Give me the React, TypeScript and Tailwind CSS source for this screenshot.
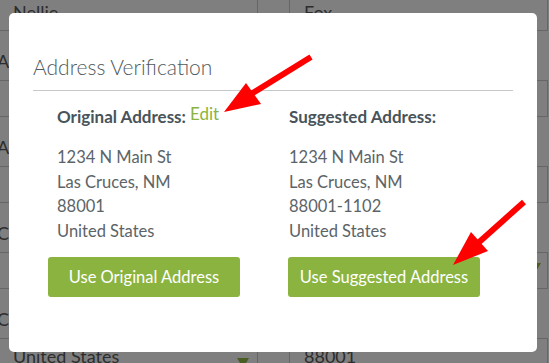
import React from "react";

const font = { fontFamily: "Lato, 'Open Sans', sans-serif" };

function Tri({ className }: { className?: string }) {
  return (
    <svg width="12" height="10" viewBox="0 0 12 10" className={className}>
      <polygon points="0,0 12,0 6,10" fill="#4a5d22" />
    </svg>
  );
}

function InputRow({ left, right, leftSelect, rightSelect }: { left?: string; right?: string; leftSelect?: boolean; rightSelect?: boolean }) {
  return (
    <div className="flex h-[37px]">
      <div className="relative -ml-px flex w-[259px] shrink-0 items-center border border-[#666] pl-[13px] text-[18px] text-[#2d2d2d]">
        {left}
        {leftSelect && <Tri className="absolute right-[8px] top-[19px]" />}
      </div>
      <div className="-ml-px w-[33px] shrink-0 border border-[#666]" />
      <div className="relative -ml-px flex w-[259px] shrink-0 items-center border border-[#666] pl-[14px] text-[18px] text-[#2d2d2d]">
        {right}
        {rightSelect && <Tri className="absolute right-[6px] top-[10px]" />}
      </div>
    </div>
  );
}

function LabelRow({ text }: { text: string }) {
  return (
    <div className="h-[49px] pt-[18px] -ml-[3px] text-[18px] leading-[24px] text-[#2d2d2d]">{text}</div>
  );
}

export default function App() {
  return (
    <div className="relative h-[363px] w-[549px] overflow-hidden bg-[#7f7f7f]" style={font}>
      <div className="-mt-[6px] flex flex-col">
        <InputRow left="Nellie" right="Fox" />
        <LabelRow text="Address" />
        <InputRow />
        <LabelRow text="Apt" />
        <InputRow />
        <LabelRow text="City" />
        <InputRow rightSelect />
        <LabelRow text="Country" />
        <InputRow left="United States" right="88001" leftSelect />
      </div>

      <div className="absolute left-[9px] top-[13px] h-[339px] w-[528px] rounded-[5px] bg-white px-[24px] pt-[42px]">
        <div className="text-[21px] leading-[24px] text-[#4f5a5e]" style={{ fontWeight: 300 }}>Address Verification</div>
        <div className="mt-[11px] h-px bg-[#c8c8c8]" />
        <div className="mt-[14px] grid grid-cols-2">
          <div>
            <div className="flex items-end pl-[24px] leading-[24px]">
              <span className="text-[17px] font-bold text-[#48535a]">Original Address:</span>
              <span className="ml-[4px] -translate-y-[3px] text-[17px] text-[#8ab43f]">Edit</span>
            </div>
            <div className="mt-[16px] pl-[24px] text-[16.5px] leading-[24.5px] text-[#5b6468]">
              <div>1234 N Main St</div>
              <div>Las Cruces, NM</div>
              <div>88001</div>
              <div>United States</div>
            </div>
            <button className="ml-[15px] mt-[14px] h-[40px] w-[192px] rounded-[3px] bg-[#8ab43f] text-[16.5px] text-white">
              Use Original Address
            </button>
          </div>
          <div>
            <div className="pl-[16px] text-[17px] font-bold leading-[24px] text-[#48535a]">Suggested Address:</div>
            <div className="mt-[16px] pl-[16px] text-[16.5px] leading-[24.5px] text-[#5b6468]">
              <div>1234 N Main St</div>
              <div>Las Cruces, NM</div>
              <div>88001-1102</div>
              <div>United States</div>
            </div>
            <button className="ml-[15px] mt-[14px] h-[40px] w-[192px] rounded-[3px] bg-[#8ab43f] text-[16.5px] text-white">
              Use Suggested Address
            </button>
          </div>
        </div>
      </div>

      <svg className="pointer-events-none absolute left-0 top-0" width="549" height="363" viewBox="0 0 549 363">
        <line x1="311" y1="57" x2="251" y2="94" stroke="#ff0000" strokeWidth="6" />
        <polygon points="224,112 246,83 261,104" fill="#ff0000" />
        <line x1="524" y1="202" x2="477" y2="244" stroke="#ff0000" strokeWidth="6" />
        <polygon points="453,265 471,232 488,251" fill="#ff0000" />
      </svg>
    </div>
  );
}
